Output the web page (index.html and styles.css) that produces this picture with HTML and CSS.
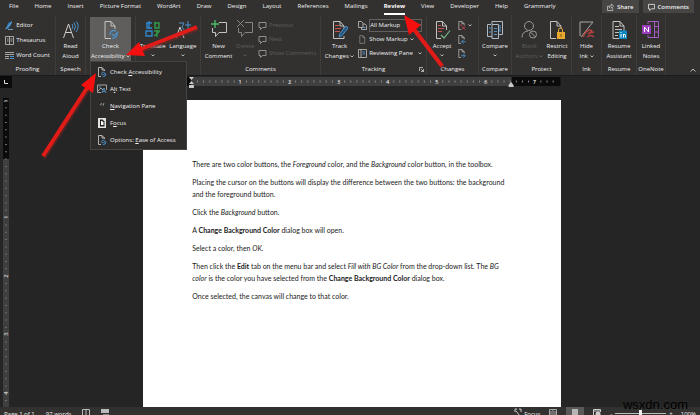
FILE: index.html
```
<!DOCTYPE html>
<html lang="en">
<head>
    <meta charset="utf-8">
    <title>Document - Review</title>
    <link rel="stylesheet" href="styles.css">
</head>
<body>
<!-- shared icon shapes -->
<svg class="shapes">
    <symbol id="caret" viewBox="0 0 4 3"><path d="M.5 .5L2 2L3.5 .5" fill="none" stroke="#ddd" stroke-width="0.8"/></symbol>
    <symbol id="sheet" viewBox="0 0 16 20"><path d="M2 1.500H9L13 6V18.500H2ZM9 1.500V6H13" fill="none" stroke="#c4c3c1"/></symbol>
    <symbol id="access" viewBox="0 0 16 20"><path d="M8 18.500H2V1.500H8L12 6V9M8 1.500V6H12" fill="none" stroke="#c4c3c1"/><path d="M7 15a4 4 0 0 1 6-4M14 13a4 4 0 0 1-5 5M9 14l2 2 4-4" fill="none" stroke="#4a94d0" stroke-width="1.200"/></symbol>
    <symbol id="access-small" viewBox="0 0 10 10"><path d="M4 9.500H1.500V.5H5L7.500 3V4M5 .5V3H7.500" fill="none" stroke="#c4c3c1" stroke-width="0.9"/><path d="M4.500 7.500a2 2 0 0 1 3-2M8.500 6.500a2 2 0 0 1-3 2.500M5.500 7l1 1 2-2" fill="none" stroke="#4a94d0"/></symbol>
    <symbol id="bubble" viewBox="0 0 8 9"><path d="M.5 1.500H7.500V6.500H4L2 8.500V6.500H.5Z" fill="none" stroke="currentColor" stroke-width="0.9"/></symbol>
</svg>

<div class="app">
    <header class="tabs">
        <nav class="tab-list">
            <a href="#">File</a>
            <a href="#">Home</a>
            <a href="#">Insert</a>
            <a href="#">Picture Format</a>
            <a href="#">WordArt</a>
            <a href="#">Draw</a>
            <a href="#">Design</a>
            <a href="#">Layout</a>
            <a href="#">References</a>
            <a href="#">Mailings</a>
            <a href="#" class="active">Review</a>
            <a href="#">View</a>
            <a href="#">Developer</a>
            <a href="#">Help</a>
            <a href="#">Grammarly</a>
        </nav>
        <div class="actions">
            <button class="action"><svg class="mini" viewBox="0 0 8 9"><path d="M3 3.500H.5V8.500H6.500V6M2.500 6Q2.500 3 5 3V1L7.500 3.500L5 6V4.500" fill="none" stroke="#ddd" stroke-width="0.8"/></svg>Share</button>
            <button class="action"><svg class="mini"><use href="#bubble"/></svg>Comments</button>
        </div>
    </header>

    <div class="ribbon">
        <section class="group">
            <div class="tools">
                <div class="list wide">
                    <button class="row"><svg class="small" viewBox="0 0 9 9"><path d="M1 8L3 2L7 0L6 4L3 8Z" fill="#2f76b5"/><path d="M0 8.500L7 1M3 8.500H8" stroke="#7db4df" stroke-width="0.8"/></svg>Editor</button>
                    <button class="row"><svg class="small" viewBox="0 0 9 9"><path d="M.5 .5H8.500V8.500H.5ZM4.500 .5V8.500M2 3H3.500M2 5H3.500M5.500 3H7.500M5.500 5H7.500" fill="none" stroke="#c4c3c1" stroke-width="0.8"/></svg>Thesaurus</button>
                    <button class="row"><svg class="small" viewBox="0 0 9 9"><path d="M0 1.500H9M0 3.500H9M0 5.500H4M0 7.500H4" stroke="#c4c3c1" stroke-width="0.8"/><path d="M5 5.500H9M5 7.500H9" stroke="#4a94d0"/></svg>Word Count</button>
                </div>
            </div>
            <div class="name">Proofing</div>
        </section>

        <section class="group">
            <div class="tools">
                <button class="big"><svg class="icon" viewBox="0 0 16 20"><path d="M.5 18L5.500 4L10.500 18M2.500 12.500H8.500" fill="none" stroke="#d0cfcd"/><path d="M9 4Q11 6 9 9M11 2.500Q14 6 11 10.500M13.500 1.500Q17 6.500 13 12" fill="none" stroke="#4a94d0"/></svg><span>Read</span><span>Aloud</span></button>
            </div>
            <div class="name">Speech</div>
        </section>

        <section class="group">
            <div class="tools">
                <button class="big pressed" aria-haspopup="menu"><svg class="icon"><use href="#access"/></svg><span>Check</span><span>Accessibility <svg class="caret"><use href="#caret"/></svg></span></button>
                <div class="menu" role="menu">
                    <button role="menuitem"><svg class="menu-icon"><use href="#access-small"/></svg><span>Check <u>A</u>ccessibility</span></button>
                    <button role="menuitem"><svg class="menu-icon" viewBox="0 0 10 10"><path d="M.5 1H9.500V6M4 8.500H.5V1M1 7L4 4L6 6" fill="none" stroke="#c4c3c1" stroke-width="0.8"/><path d="M5 9L7 4L9 9M6 7.500H8M2 3H4" fill="none" stroke="#5aa0d8" stroke-width="0.8"/></svg><span>A<u>l</u>t Text</span></button>
                    <button role="menuitem"><svg class="menu-icon" viewBox="0 0 10 10"><path d="M4.500 2L3.500 4H4.500M7 2L6 4H7" fill="none" stroke="#b0afad" stroke-width="0.8"/></svg><span><u>N</u>avigation Pane</span></button>
                    <button role="menuitem"><svg class="menu-icon" viewBox="0 0 10 10"><path d="M1 0H9V10H1Z" fill="#e4e3e1"/><path d="M3 1.500H5.500L7.500 3.500V8.500H3Z" fill="#222"/><path d="M4 3H5L6.500 4.500V7H4Z" fill="#fff"/></svg><span>F<u>o</u>cus</span></button>
                    <button role="menuitem"><svg class="menu-icon"><use href="#access-small"/></svg><span>Options: <u>E</u>ase of Access</span></button>
                </div>
            </div>
        </section>

        <section class="group">
            <div class="tools">
                <button class="big"><svg class="icon" viewBox="0 0 16 20"><path d="M1 3H7M2 3V8H7M1 11H7V16H1ZM4 1V9" fill="none" stroke="#2f86cc" stroke-width="1.400"/><path d="M10 2V8H14V3H9M9 11H15M12 10V17M9 16L14 12" fill="none" stroke="#2f9a48" stroke-width="1.400"/></svg><span>Translate</span><svg class="caret"><use href="#caret"/></svg></button>
                <button class="big"><svg class="icon" viewBox="0 0 16 20"><path d="M1 18L5 7L9 18M2.500 14H7.500" fill="none" stroke="#d0cfcd"/><path d="M4 3H9L7 7L10 11M13 1V10M10 5H16" fill="none" stroke="#4a94d0"/></svg><span>Language</span><svg class="caret"><use href="#caret"/></svg></button>
            </div>
        </section>

        <section class="group">
            <div class="tools">
                <button class="big"><svg class="icon" viewBox="0 0 16 20"><path d="M8 2.500H15.500V12.500H8L4.500 16.500V12.500H1.500V8" fill="none" stroke="#c4c3c1"/><path d="M4 0V8M0 4H8" stroke="#4fb868" stroke-width="1.400"/></svg><span>New</span><span>Comment</span></button>
                <button class="big" disabled><svg class="icon" viewBox="0 0 16 20"><path d="M8 2.500H15.500V12.500H8L4.500 16.500V12.500H1.500V8M0 0L7 7M7 0L0 7" fill="none" stroke="#868584"/></svg><span>Delete</span><svg class="caret"><use href="#caret"/></svg></button>
                <div class="list">
                    <button class="row" disabled><svg class="small bright"><use href="#bubble"/></svg>Previous</button>
                    <button class="row" disabled><svg class="small bright"><use href="#bubble"/></svg>Next</button>
                    <button class="row" disabled><svg class="small bright"><use href="#bubble"/></svg>Show Comments</button>
                </div>
            </div>
            <div class="name">Comments</div>
        </section>

        <section class="group">
            <div class="tools">
                <button class="big"><svg class="icon" viewBox="0 0 16 20"><path d="M12 9V6L8 1.500H1.500V18.500H12V16M8 1.500V6H12" fill="none" stroke="#c4c3c1"/><path d="M3 5.500H7M3 8.500H9M3 11.500H8" stroke="#c9534f"/><path d="M7 17L8 13.500L14 6L16 8L10 15.500Z" fill="#24527a" stroke="#4a94d0"/></svg><span>Track</span><span>Changes <svg class="caret"><use href="#caret"/></svg></span></button>
                <div class="list">
                    <div class="row"><svg class="small" viewBox="0 0 9 9"><path d="M.5 .5H3.500L5 2V6.500H.5ZM5 3H7L8.500 4.500V8.500H3.500V6.500" fill="none" stroke="#c4c3c1" stroke-width="0.8"/><path d="M5 6.500H7.500" stroke="#4a94d0"/></svg>
                        <label class="picker"><select aria-label="Display for review"><option>All Markup</option><option>No Markup</option></select><svg class="caret"><use href="#caret"/></svg></label></div>
                    <button class="row"><svg class="small"><use href="#sheet"/></svg>Show Markup <svg class="caret"><use href="#caret"/></svg></button>
                    <button class="row"><svg class="small" viewBox="0 0 9 9"><path d="M.5 .5H8.500V8.500H.5ZM3 .5V8.500" fill="none" stroke="#c4c3c1" stroke-width="0.8"/><path d="M4.500 3H7M4.500 5H7" stroke="#4a94d0" stroke-width="1.200"/></svg>Reviewing Pane <svg class="caret spaced"><use href="#caret"/></svg></button>
                </div>
            </div>
            <div class="name">Tracking<svg class="launcher" viewBox="0 0 5 5"><path d="M.5 4V.5H4M2 2L4.500 4.500M4.500 2V4.500H2" fill="none" stroke="#ccc" stroke-width="0.8"/></svg></div>
        </section>

        <section class="group">
            <div class="tools">
                <button class="big"><svg class="icon" viewBox="0 0 16 20"><path d="M12.500 10V6L8.500 1.500H2.500V18.500H7M8.500 1.500V6H12.500" fill="none" stroke="#c4c3c1"/><path d="M4 5.500H7M4 8.500H10M4 11.500H8" stroke="#c9534f"/><path d="M7 15L10 18L16 10.500" fill="none" stroke="#78b583" stroke-width="1.200"/></svg><span>Accept</span><svg class="caret"><use href="#caret"/></svg></button>
                <div class="list">
                    <button class="row" aria-label="Reject"><svg class="small" viewBox="0 0 9 10"><path d="M4 9.500H1.500V.5H5L7.500 3V5M5 .5V3H7.500" fill="none" stroke="#c4c3c1" stroke-width="0.8"/><path d="M5 6L8.500 9.500M8.500 6L5 9.500M3 4.500H5" stroke="#d9484a"/></svg><svg class="caret"><use href="#caret"/></svg></button>
                    <button class="row" aria-label="Previous change"><svg class="small" viewBox="0 0 9 10"><path d="M4 9.500H1.500V.5H5L7.500 3V5M5 .5V3H7.500" fill="none" stroke="#c4c3c1" stroke-width="0.8"/><path d="M9 7.500H4.500M6.500 5.500L4.500 7.500L6.500 9.500" fill="none" stroke="#4a94d0"/></svg></button>
                    <button class="row" aria-label="Next change"><svg class="small" viewBox="0 0 9 10"><path d="M4 9.500H1.500V.5H5L7.500 3V5M5 .5V3H7.500" fill="none" stroke="#c4c3c1" stroke-width="0.8"/><path d="M4 7.500H8.500M6.500 5.500L8.500 7.500L6.500 9.500" fill="none" stroke="#4a94d0"/></svg></button>
                </div>
            </div>
            <div class="name">Changes</div>
        </section>

        <section class="group">
            <div class="tools">
                <button class="big"><svg class="icon" viewBox="0 0 16 20"><path d="M5 4V1.500H15.500V14.500H12M4 4.500H.5V16.500H5M5 4.500H11.500V18.500H5Z" fill="none" stroke="#aebbc6"/><path d="M7 8.500H10M7 11.500H10M7 14.500H10M13 5V12M2 8H4M2 12H4" stroke="#4a94d0"/></svg><span>Compare</span><svg class="caret"><use href="#caret"/></svg></button>
            </div>
            <div class="name">Compare</div>
        </section>

        <section class="group">
            <div class="tools">
                <button class="big" disabled><svg class="icon" viewBox="0 0 16 20"><circle cx="8" cy="6" r="4.500" fill="none" stroke="#9a9998"/><path d="M1 17.500Q1 11.500 7 11" fill="none" stroke="#9a9998"/><circle cx="12" cy="14.500" r="3.500" fill="none" stroke="#9a9998"/><path d="M9.500 12L14.500 17" stroke="#9a9998"/></svg><span>Block</span><span>Authors <svg class="caret"><use href="#caret"/></svg></span></button>
                <button class="big"><svg class="icon" viewBox="0 0 16 20"><path d="M7 18.500H1.500V1.500H8L12 6V9M8 1.500V6H12" fill="none" stroke="#c4c3c1"/><path d="M9.500 12V10Q9.500 8 11.500 8T13.500 10V12" fill="none" stroke="#e8a92f"/><path d="M8 12H16V19H8Z" fill="#e8a92f"/><path d="M12 14V17" stroke="#7a5510"/></svg><span>Restrict</span><span>Editing</span></button>
            </div>
            <div class="name">Protect</div>
        </section>

        <section class="group">
            <div class="tools">
                <button class="big"><svg class="icon" viewBox="0 0 16 20"><path d="M1 16V2H14L2 17" fill="none" stroke="#aaa9a7"/><path d="M4 17Q7 10 11 10T9 14Q12 12 15 12M8 17Q12 14 15 17" fill="none" stroke="#b5413f" stroke-width="1.400"/></svg><span>Hide</span><span>Ink <svg class="caret"><use href="#caret"/></svg></span></button>
            </div>
            <div class="name">Ink</div>
        </section>

        <section class="group">
            <div class="tools">
                <button class="big"><svg class="icon" viewBox="0 0 16 20"><use href="#sheet" x="0" y="0" width="16" height="20"/><path d="M4 6.500H8M4 9.500H11M4 12.500H8M4 15.500H7" stroke="#c4c3c1"/><path d="M8 10.500H16V19H8Z" fill="#0a86c0"/><path d="M10 14V17.500M12.500 17.500V14M12.500 15Q14.500 13.500 14.500 15.500V17.500M10 12V13" fill="none" stroke="#fff"/></svg><span>Resume</span><span>Assistant</span></button>
            </div>
            <div class="name">Resume</div>
        </section>

        <section class="group">
            <div class="tools">
                <button class="big"><svg class="icon" viewBox="0 0 16 20"><path d="M5 4V1.500H15.500V17.500H5V15M11.500 1.500V17.500M12 6.500H15M12 12H15" fill="none" stroke="#a55cc0"/><path d="M-1 5H8V14H-1Z" fill="#9b3fc0"/><path d="M1.500 12V7L5.500 12V7" fill="none" stroke="#fff"/></svg><span>Linked</span><span>Notes</span></button>
            </div>
            <div class="name">OneNote</div>
        </section>

        <section class="group last">
            <button class="collapse" aria-label="Collapse the ribbon"><svg viewBox="0 0 6 4"><path d="M.5 3.500L3 1L5.500 3.500" fill="none" stroke="#ccc" stroke-width="0.9"/></svg></button>
        </section>
    </div>

    <main class="workspace">
        <div class="side">
            <div class="tab-stop"><svg viewBox="0 0 4 4"><path d="M.5 0V3.500H4" fill="none" stroke="#ddd"/></svg></div>
            <svg class="ruler-v" viewBox="0 0 6 352">
                <path d="M0 0H6V352H0Z" fill="#3f3f3f"/>
                <path d="M0 0H6V61H0Z" fill="#0b0b0b"/>
                <path d="M3 2V352" stroke="#6c6c6c" stroke-width="2" stroke-dasharray="1 6.320"/>
                <g class="ruler-num">
                    <text transform="translate(5 3) rotate(-90)">1</text>
                    <text transform="translate(5 119) rotate(-90)">1</text>
                    <text transform="translate(5 178) rotate(-90)">2</text>
                    <text transform="translate(5 236) rotate(-90)">3</text>
                    <text transform="translate(5 295) rotate(-90)">4</text>
                </g>
            </svg>
        </div>
        <div class="canvas">
            <svg class="ruler-h" viewBox="0 0 418 12">
                <path d="M0 1H418V10H0Z" fill="#0b0b0b"/>
                <path d="M48 1H369V10H48Z" fill="#3f3f3f"/>
                <path d="M54 5.500H416" stroke="#8a8a8a" stroke-width="2" stroke-dasharray="1 5.140"/>
                <g class="ruler-num">
                    <text x="97" y="8">1</text>
                    <text x="147" y="8">2</text>
                    <text x="196" y="8">3</text>
                    <text x="245" y="8">4</text>
                    <text x="294" y="8">5</text>
                    <text x="343" y="8">6</text>
                    <text x="392" y="8">7</text>
                </g>
                <path d="M46 1H51L48.500 4ZM46 8L48.500 5L51 8ZM46 9H51V12H46ZM366 9L368.500 6L371 9V11H366Z" fill="#c8c8c8"/>
            </svg>
            <article class="page">
                <p>There are two color buttons, the <i>Foreground</i> color, and the <i>Background</i> color button, in the toolbox.</p>
                <p>Placing the cursor on the buttons will display the difference between the two buttons: the background and the foreground button.</p>
                <p>Click the <i>Background</i> button.</p>
                <p>A <b>Change Background Color</b> dialog box will open.</p>
                <p>Select a color, then <i>OK.</i></p>
                <p>Then click the <b>Edit</b> tab on the menu bar and select <i>Fill with BG Color</i> from the drop-down list. The <i>BG color</i> is the color you have selected from the <b>Change Background Color</b> dialog box.</p>
                <p>Once selected, the canvas will change to that color.</p>
            </article>
        </div>
    </main>

    <footer class="status">
        <div class="status-side">
            <span>Page 1 of 1</span>
            <span>97 words</span>
            <svg class="status-icon" viewBox="0 0 8 8"><path d="M.5 1.500H7.500V8M.5 1.500V8M4 1.500V8" fill="none" stroke="#bbb"/></svg>
            <svg class="status-icon" viewBox="0 0 8 8"><path d="M0 1H8V5H0Z" fill="#bbb"/><path d="M2 6H8V8H2Z" fill="#888"/></svg>
        </div>
        <div class="status-side right">
            <button class="focus"><svg class="status-icon" viewBox="0 0 8 8"><path d="M1 4V1H3M5 1H7V4M2 3L6 8" fill="none" stroke="#ccc"/></svg>Focus</button>
            <button class="view" aria-label="Read mode"><svg class="status-icon" viewBox="0 0 8 8"><path d="M.5 1.500H7.500V8M.5 1.500V8M4 1.500V8M2 3V8M6 3V8" fill="none" stroke="#aaa"/></svg></button>
            <button class="view on" aria-label="Print layout"><svg class="status-icon" viewBox="0 0 8 8"><path d="M1 1H7V8H1Z" fill="#b5b5b5"/></svg></button>
            <button class="view" aria-label="Web layout"><svg class="status-icon" viewBox="0 0 8 8"><path d="M.5 8V1.500H7.500V4M1 3H7" fill="none" stroke="#ccc"/><circle cx="5" cy="6" r="2.500" fill="#ccc"/></svg></button>
            <span class="zoom"><span>-</span><input type="range" aria-label="Zoom"><span>+</span></span>
            <span>100%</span>
        </div>
    </footer>

    <!-- red pointer arrows -->
    <svg class="arrows" viewBox="0 0 700 415">
        <g fill="none" stroke="#7d2522" stroke-width="4" opacity="0.5"><path d="M198 29L142 51M44 158L88 90M443 67L414 30"/></g>
        <g fill="none" stroke="#e01b18" stroke-width="4"><path d="M197 27L141 49M43 156L87 88M442 66L413 28"/></g>
        <path d="M126 55L139 42L145 56ZM96 73L93 93L81 85ZM404 15L421 25L409 35Z" fill="#f5100f"/>
    </svg>
    <div class="watermark">wsxdn.com</div>
</div>
</body>
</html>
```
FILE: styles.css
```
body {
    margin: 0;
    background: #252525;
    color: #f0f0f0;
    font-family: "Open Sans", "Noto Sans", sans-serif;
    font-size: 6px;
}

button, select {
    margin: 0;
    padding: 0;
    border: 0;
    background: none;
    color: inherit;
    font: inherit;
}

button:disabled {
    color: #5f5e5c;
}

svg {
    display: block;
    flex: none;
}

.shapes {
    display: none;
}

.app {
    position: relative;
    display: flex;
    flex-direction: column;
    height: 100vh;
    overflow: hidden;
}

/* tab strip */
.tabs {
    display: flex;
    justify-content: space-between;
    height: 15px;
    padding: 0 6px 0 9px;
    background: #323130;
}

.tab-list {
    display: flex;
    gap: 16px;
    line-height: 13px;
}

.tab-list a {
    height: 13px;
    color: #f0f0f0;
    text-decoration: none;
    white-space: nowrap;
}

.tab-list .active {
    border-bottom: 2px solid #fff;
    color: #fff;
    font-weight: bold;
}

.actions {
    display: flex;
    gap: 4px;
    height: 13px;
}

.action {
    display: flex;
    align-items: center;
    gap: 3px;
    padding: 0 5px;
    background: #474645;
    font-weight: 600;
}

.mini {
    width: 7px;
    height: 8px;
}

/* ribbon */
.ribbon {
    display: grid;
    grid-template-columns: 56fr 30fr 50fr 65fr 120fr 106fr 52fr 33fr 60fr 30fr 35fr 29fr 34fr;
    height: 60px;
    background: #323130;
}

.group {
    display: flex;
    flex-direction: column;
    min-width: 0;
    border-right: 1px solid #3e3d3c;
}

.last {
    border: 0;
}

.tools {
    position: relative;
    display: flex;
    justify-content: space-evenly;
    flex: 1;
    padding-top: 2px;
}

.name {
    position: relative;
    height: 11px;
    line-height: 10px;
    text-align: center;
}

.launcher {
    position: absolute;
    top: 3px;
    right: 2px;
    width: 5px;
    height: 5px;
}

.big {
    display: flex;
    flex-direction: column;
    align-items: center;
    height: 45px;
    padding-top: 3px;
    line-height: 10px;
    white-space: nowrap;
}

.icon {
    width: 16px;
    height: 20px;
    margin-bottom: 1px;
    overflow: visible;
}

.caret {
    display: inline-block;
    width: 4px;
    height: 3px;
    vertical-align: middle;
}

.big > .caret {
    margin-top: 3px;
}

button:disabled .caret {
    opacity: 0.3;
}

.spaced {
    margin-left: 3px;
}

.pressed {
    padding-right: 1px;
    padding-left: 1px;
    background: #5f5e5d;
}

.list {
    display: flex;
    flex-direction: column;
    gap: 4px;
    padding-top: 3px;
}

.wide {
    gap: 5px;
}

.row {
    display: flex;
    align-items: center;
    gap: 2px;
    height: 10px;
    white-space: nowrap;
}

.small {
    width: 9px;
    height: 9px;
}

.bright {
    color: #9a9998;
}

.picker {
    display: flex;
    align-items: center;
    width: 51px;
    height: 11px;
    border: 1px solid #62615f;
}

.picker select {
    flex: 1;
    appearance: none;
}

.collapse {
    margin-top: auto;
    margin-left: auto;
    padding: 3px 4px;
}

.collapse svg {
    width: 6px;
    height: 4px;
}

/* accessibility drop-down */
.menu {
    position: absolute;
    top: 46px;
    left: 4px;
    z-index: 2;
    padding: 1px 0;
    border: 1px solid #454443;
    background: #2d2c2b;
}

.menu button {
    display: flex;
    align-items: center;
    gap: 3px;
    width: 95px;
    height: 17px;
    padding-left: 6px;
    white-space: nowrap;
}

.menu-icon {
    width: 10px;
    height: 10px;
}

/* rulers and page */
.workspace {
    display: flex;
    flex: 1;
    min-height: 0;
    border-top: 1px solid #1c1c1c;
    overflow: hidden;
}

.side {
    flex: none;
    width: 12px;
}

.tab-stop {
    display: flex;
    justify-content: center;
    align-items: center;
    height: 12px;
    margin-bottom: 10px;
    background: #0b0b0b;
}

.tab-stop svg {
    width: 4px;
    height: 4px;
}

.ruler-v {
    width: 6px;
    height: 352px;
    margin-left: 3px;
}

.ruler-num {
    fill: #e8e8e8;
    font-size: 6px;
    text-anchor: middle;
}

.canvas {
    display: flex;
    flex-direction: column;
    flex: 1;
    align-items: center;
    padding-right: 8px;
}

.ruler-h {
    width: 61.4%;
    height: 12px;
    margin-bottom: 12px;
}

.page {
    flex: 1;
    box-sizing: border-box;
    width: 61.4%;
    padding: 58px 49px 0;
    background: #fff;
    color: #1a1a1a;
    font-family: Lato, "Open Sans", sans-serif;
    font-size: 7px;
    line-height: 12px;
}

.page p {
    margin: 0 0 6px;
}

/* status bar */
.status {
    display: flex;
    justify-content: space-between;
    height: 8px;
    padding: 0 4px;
    background: #323130;
    line-height: 14px;
    overflow: hidden;
}

.status-side {
    display: flex;
    gap: 11px;
}

.right {
    gap: 8px;
}

.status-icon {
    width: 8px;
    height: 8px;
    margin-top: 1px;
}

.focus {
    display: flex;
    gap: 2px;
    height: 14px;
    line-height: 14px;
}

.view {
    height: 14px;
    padding: 0 1px;
}

.view svg {
    margin-bottom: 6px;
}

.on {
    padding: 0 5px;
    background: #5a5958;
}

.zoom {
    display: flex;
    gap: 3px;
}

.zoom input {
    appearance: none;
    width: 51px;
    height: 1px;
    margin: 6px 0 0;
    background: #bbb;
}

.zoom input::-webkit-slider-thumb {
    appearance: none;
    width: 3px;
    height: 8px;
    background: #eee;
}

/* overlays */
.arrows {
    position: absolute;
    top: 0;
    left: 0;
    z-index: 3;
    width: 100%;
    pointer-events: none;
}

.watermark {
    position: absolute;
    right: 12px;
    bottom: 3px;
    color: #000;
    font-family: "Liberation Sans", Arial, sans-serif;
    font-size: 13px;
    line-height: 15px;
}
```
